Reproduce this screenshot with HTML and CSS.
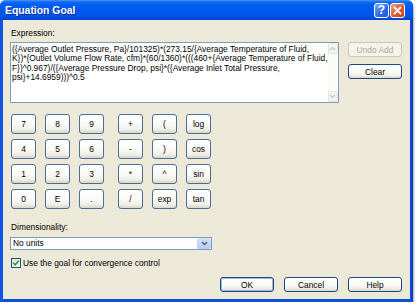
FILE: index.html
```html
<!DOCTYPE html>
<html>
<head>
<meta charset="utf-8">
<title>Equation Goal</title>
<link rel="stylesheet" href="styles.css">
</head>
<body>
<div class="window">
  <div class="titlebar">
    <span class="title">Equation Goal</span>
    <div class="tb-btns">
      <span class="tb-btn tb-help">?</span>
      <span class="tb-btn tb-close"><svg width="9" height="9" viewBox="0 0 9 9"><path d="M1.5 1.5 L7.5 7.5 M7.5 1.5 L1.5 7.5" stroke="#fff" stroke-width="1.8" stroke-linecap="round"/></svg></span>
    </div>
  </div>
  <div class="client">
    <div class="label">Expression:</div>
    <div class="expr-row">
      <div class="expr">
        <div class="expr-text">
          <div class="line">({Average Outlet Pressure, Pa}/101325)*(273.15/{Average Temperature of Fluid,</div>
          <div class="line">K})*{Outlet Volume Flow Rate, cfm}*(60/1360)*(((460+{Average Temperature of Fluid,</div>
          <div class="line">F})^0.967)/({Average Pressure Drop, psi}*({Average Inlet Total Pressure,</div>
          <div class="line">psi}+14.6959)))^0.5</div>
        </div>
        <div class="vscroll">
          <span class="sb-btn"><svg width="7" height="5" viewBox="0 0 7 5"><path d="M1 4 L3.5 1.5 L6 4" fill="none" stroke="#C5CCD6" stroke-width="1.4"/></svg></span>
          <span class="sb-track"></span>
          <span class="sb-btn"><svg width="7" height="5" viewBox="0 0 7 5"><path d="M1 1 L3.5 3.5 L6 1" fill="none" stroke="#C5CCD6" stroke-width="1.4"/></svg></span>
        </div>
      </div>
      <div class="side-btns">
        <button class="btn disabled">Undo Add</button>
        <button class="btn">Clear</button>
      </div>
    </div>
    <div class="keypad">
      <div class="kgroup">
        <button class="key">7</button><button class="key">8</button><button class="key">9</button>
        <button class="key">4</button><button class="key">5</button><button class="key">6</button>
        <button class="key">1</button><button class="key">2</button><button class="key">3</button>
        <button class="key">0</button><button class="key">E</button><button class="key">.</button>
      </div>
      <div class="kgroup">
        <button class="key">+</button><button class="key">(</button><button class="key">log</button>
        <button class="key">-</button><button class="key">)</button><button class="key">cos</button>
        <button class="key">*</button><button class="key">^</button><button class="key">sin</button>
        <button class="key">/</button><button class="key">exp</button><button class="key">tan</button>
      </div>
    </div>
    <div class="label dim">Dimensionality:</div>
    <div class="select">
      <span class="select-text">No units</span>
      <span class="select-arrow"><svg width="7" height="5" viewBox="0 0 7 5"><path d="M1 1 L3.5 3.5 L6 1" fill="none" stroke="#4D6185" stroke-width="1.5"/></svg></span>
    </div>
    <div class="check">
      <span class="check-box"><svg width="8" height="8" viewBox="0 0 8 8"><path d="M1.2 3.8 L3.2 5.8 L6.8 1.8" fill="none" stroke="#21A121" stroke-width="1.6"/></svg></span>
      <span>Use the goal for convergence control</span>
    </div>
    <div class="footer">
      <button class="btn default">OK</button>
      <button class="btn">Cancel</button>
      <button class="btn">Help</button>
    </div>
  </div>
</div>
</body>
</html>
```

FILE: styles.css
```css
* { box-sizing: border-box; }
html, body { margin: 0; padding: 0; background: #fff; }
body {
  font-family: "Liberation Sans", Arial, sans-serif;
  font-size: 8.4px;
  color: #000;
}
.window {
  width: 413px;
  height: 302px;
  display: flex;
  flex-direction: column;
  background: linear-gradient(to right, #0A3FCB 0, #1660EA 1px, #0C50DD 3px, #0C50DD 410px, #0A3FCB 412px);
  border-radius: 6px 6px 0 0;
  box-shadow: 1px 2px 2px rgba(0, 0, 0, 0.35);
}
.titlebar {
  height: 20px;
  flex: none;
  display: flex;
  align-items: center;
  padding: 0 8px 0 5px;
  border-radius: 6px 6px 0 0;
  background: linear-gradient(to bottom, #4A96F8 0, #1268F2 2px, #005CF0 5px, #0058EC 11px, #0054E8 16px, #0048D6 19px, #003FC6 20px);
}
.title {
  flex: 1;
  color: #fff;
  font-weight: bold;
  font-size: 10.4px;
  text-shadow: 1px 1px 0 #0A2A9A;
}
.tb-btns { display: flex; gap: 1px; }
.tb-btn {
  width: 15px;
  height: 15px;
  border: 1px solid #fff;
  border-radius: 3px;
  display: flex;
  align-items: center;
  justify-content: center;
}
.tb-help {
  background: linear-gradient(135deg, #7FA8F8, #2D66E6 60%, #1F55D8);
  color: #fff;
  font-weight: bold;
  font-size: 12px;
  line-height: 1;
}
.tb-close {
  background: linear-gradient(135deg, #F0A080, #E0562C 55%, #C8401C);
}
.client {
  flex: 1;
  margin: 0 3px 3px 3px;
  background: #ECE9D8;
  display: flex;
  flex-direction: column;
  padding: 8px 8px 7px 7px;
}
.label {
  line-height: 10px;
  padding-left: 1px;
  margin-bottom: 4px;
}
.expr-row {
  display: flex;
  gap: 9px;
  height: 61px;
}
.expr {
  width: 329px;
  border: 1px solid #7F9DB9;
  background: #fff;
  display: flex;
}
.expr-text {
  flex: 1;
  padding: 2px 0 0 1px;
  line-height: 9.3px;
  white-space: nowrap;
}
.vscroll {
  width: 11px;
  display: flex;
  flex-direction: column;
  background: #FBFBF8;
}
.sb-btn {
  height: 11px;
  border: 1px solid #E6E4DC;
  border-radius: 2px;
  background: #F4F3EE;
  display: flex;
  align-items: center;
  justify-content: center;
}
.sb-track { flex: 1; }
.side-btns {
  display: flex;
  flex-direction: column;
  gap: 7px;
}
.btn, .key {
  font-family: "Liberation Sans", Arial, sans-serif;
  font-size: 8.4px;
  color: #000;
  padding: 0;
  margin: 0;
  border: 1px solid #1E4A7E;
  border-radius: 3px;
  background: linear-gradient(to bottom, #FFFFFF 0, #FAFAF7 50%, #F0EFE8 80%, #D8D4C8 100%);
}
.btn { width: 54px; height: 15px; }
.btn.disabled {
  color: #ACA899;
  border-color: #C9C7BA;
  background: #F5F4EA;
}
.btn.default {
  box-shadow: inset 0 0 0 1px #9DB8EE;
}
.keypad {
  display: flex;
  gap: 14px;
  margin: 11px 0 0 1px;
}
.kgroup {
  display: grid;
  grid-template-columns: repeat(3, 25px);
  grid-auto-rows: 20px;
  gap: 5px 9px;
}
.key { border-color: #4C6E96; }
.dim { margin: 13px 0 5px 0; }
.select {
  width: 202px;
  height: 13px;
  border: 1px solid #7F9DB9;
  background: #fff;
  display: flex;
  align-items: stretch;
}
.select-text {
  flex: 1;
  padding-left: 2px;
  line-height: 11px;
}
.select-arrow {
  width: 14px;
  border-radius: 2px;
  background: linear-gradient(to bottom, #D6E3FD, #B6CBF8);
  display: flex;
  align-items: center;
  justify-content: center;
}
.check {
  display: flex;
  align-items: center;
  gap: 2px;
  margin: 8px 0 0 1px;
  line-height: 10px;
}
.check-box {
  width: 10px;
  height: 10px;
  border: 1px solid #1C5180;
  background: linear-gradient(135deg, #DCDCD7, #FFFFFF);
  display: flex;
  align-items: center;
  justify-content: center;
}
.footer {
  margin-top: auto;
  display: flex;
  justify-content: flex-end;
  gap: 10px;
}
```
